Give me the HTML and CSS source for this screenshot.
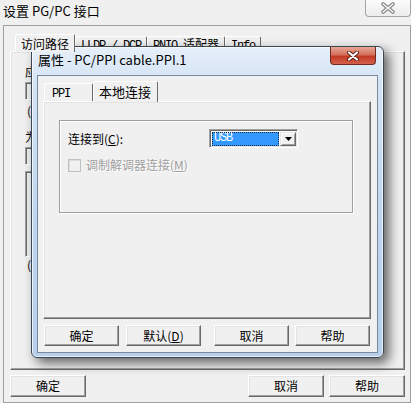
FILE: index.html
```html
<!DOCTYPE html>
<html lang="zh-CN">
<head>
  <meta charset="UTF-8">
  <title>设置 PG/PC 接口</title>
  <link rel="stylesheet" href="styles.css">
</head>
<body>
  <div class="window">
    <div class="titlebar">
      <span class="title">设置 PG/PC 接口</span>
      <span class="win-close">
        <svg width="16" height="12" viewBox="0 0 16 12">
          <path d="M3 2 L13 10 M13 2 L3 10" stroke="#858585" stroke-width="3.6" stroke-linecap="round"/>
          <path d="M3 2 L13 10 M13 2 L3 10" stroke="#f7f7f7" stroke-width="1.6" stroke-linecap="round"/>
        </svg>
      </span>
    </div>

    <div class="frame">
      <div class="tabs">
        <span class="tab active">访问路径</span>
        <span class="tab"><span class="mono">LLDP / DCP</span></span>
        <span class="tab"><span class="mono word">PNIO</span>适配器</span>
        <span class="tab"><span class="mono">Info</span></span>
      </div>
      <div class="panel outer-panel">
        <!-- only the left edge of this page shows from under the dialog -->
        <div class="field-label">应</div>
        <div class="sunken wide"></div>
        <div class="hint">(</div>
        <div class="field-label">为</div>
        <div class="sunken wide"></div>
        <div class="sunken list"></div>
        <div class="hint">(</div>
      </div>
      <div class="actions">
        <button class="btn">确定</button>
        <button class="btn push">取消</button>
        <button class="btn">帮助</button>
      </div>
    </div>

    <!-- properties dialog on top -->
    <div class="dialog">
      <div class="dialog-title">
        <span class="dialog-caption">属性 - PC/PPI cable.PPI.1</span>
        <span class="dialog-close">
          <svg width="14" height="10" viewBox="0 0 14 10">
            <path d="M3 1.5 L11 8.5 M11 1.5 L3 8.5" stroke="#5a1a10" stroke-width="4" stroke-linecap="round"/>
            <path d="M3 1.5 L11 8.5 M11 1.5 L3 8.5" stroke="#fff" stroke-width="2.2" stroke-linecap="round"/>
          </svg>
        </span>
      </div>
      <div class="client">
        <div class="tabs d-tabs">
          <span class="tab ppi"><span class="mono">PPI</span></span>
          <span class="tab active local">本地连接</span>
        </div>
        <div class="panel inner-panel">
          <div class="group">
            <div class="row">
              <span class="row-label">连接到(<u>C</u>):</span>
              <div class="combo">
                <span class="combo-value mono">USB</span>
                <span class="combo-arrow">
                  <svg width="7" height="4" viewBox="0 0 7 4"><path d="M0 0 H7 L3.5 4 Z" fill="#000"/></svg>
                </span>
              </div>
            </div>
            <div class="row check-row">
              <span class="checkbox"></span>
              <span class="disabled">调制解调器连接(<u>M</u>)</span>
            </div>
          </div>
        </div>
        <div class="dialog-actions">
          <button class="btn small">确定</button>
          <button class="btn small gap-a">默认(<u>D</u>)</button>
          <button class="btn small gap-b">取消</button>
          <button class="btn small gap-c">帮助</button>
        </div>
      </div>
    </div>
  </div>
</body>
</html>
```

FILE: styles.css
```css
* {
  margin: 0;
  padding: 0;
  box-sizing: border-box;
}

body {
  width: 411px;
  height: 403px;
  overflow: hidden;
  background: #f0f0f0;
  font-family: "Noto Sans CJK SC", "Noto Sans", sans-serif;
  font-size: 12px;
  line-height: 14px;
  color: #000;
}

.mono {
  font-family: "Liberation Mono", "Noto Sans CJK SC", monospace;
  font-size: 12px;
  letter-spacing: -1.2px;
}

.mono.word {
  margin-right: 6px;
}

u {
  text-underline-offset: 1px;
}

.window {
  position: relative;
  height: 403px;
}

/* outer window */
.titlebar {
  height: 25px;
  display: flex;
  align-items: flex-start;
}

.title {
  font-size: 13px;
  line-height: 18px;
  padding: 2px 0 0 3px;
}

.win-close {
  margin-left: auto;
  width: 46px;
  height: 17px;
  display: flex;
  justify-content: center;
  align-items: center;
  border: 1px solid #a6a6a6;
  border-top: none;
  border-radius: 0 0 4px 4px;
  background: linear-gradient(#fbfbfb, #ececec);
}

.frame {
  margin-left: 3px;
  width: 408px;
  height: 378px;
  border: 1px solid #a0a0a0;
  padding: 8px 0 0 6px;
}

.tabs {
  display: flex;
  align-items: flex-end;
  height: 17px;
  padding-left: 5px;
}

.tab {
  height: 15px;
  padding: 0 5px;
  line-height: 14px;
  white-space: nowrap;
  border: 1px solid;
  border-color: #fff #696969 transparent #fff;
  border-bottom: none;
  border-radius: 2px 2px 0 0;
  background: #f0f0f0;
}

.tab.active {
  height: 18px;
  margin-bottom: -1px;
  padding-top: 2px;
  position: relative;
  z-index: 1;
}

.panel {
  border: 1px solid;
  border-color: #fff #696969 #696969 #fff;
  box-shadow: inset -1px -1px #a0a0a0, inset 1px 1px #e3e3e3;
}

.outer-panel {
  width: 395px;
  height: 319px;
  padding: 12px 0 0 14px;
}

.field-label {
  line-height: 16px;
}

.sunken {
  border: 1px solid;
  border-color: #a0a0a0 #fff #fff #a0a0a0;
  box-shadow: inset 1px 1px #696969;
  background: #f0f0f0;
}

.wide {
  width: 300px;
  height: 18px;
  margin: 2px 0 3px;
}

.list {
  width: 300px;
  height: 86px;
  margin-top: 6px;
}

.hint {
  line-height: 16px;
  margin-bottom: 10px;
  padding-left: 2px;
}

.actions {
  display: flex;
  width: 395px;
  margin-top: 5px;
}

.btn {
  width: 76px;
  height: 22px;
  font: inherit;
  font-size: 12px;
  line-height: 14px;
  color: #000;
  background: #f0f0f0;
  border: 1px solid;
  border-color: #fff #696969 #696969 #fff;
  box-shadow: inset -1px -1px #a0a0a0, inset 1px 1px #e3e3e3;
}

.push {
  margin-left: auto;
  margin-right: 5px;
}

/* properties dialog */
.dialog {
  position: absolute;
  left: 31px;
  top: 46px;
  width: 353px;
  height: 312px;
  border: 1px solid #3c4650;
  border-radius: 6px;
  padding: 0 5px;
  background: linear-gradient(#e6eff9, #d3e3f4 12%, #bdd5ee 60%, #b6d0ec);
  box-shadow: inset 0 0 0 1px rgba(255, 255, 255, 0.7), 5px 5px 12px rgba(0, 0, 0, 0.6);
}

.dialog-title {
  height: 28px;
  display: flex;
  align-items: flex-start;
}

.dialog-caption {
  font-size: 13px;
  line-height: 18px;
  padding: 4px 0 0 1px;
}

.dialog-close {
  margin-left: auto;
  margin-right: 2px;
  width: 46px;
  height: 18px;
  display: flex;
  justify-content: center;
  align-items: center;
  border: 1px solid #6e2a20;
  border-top: none;
  border-radius: 0 0 4px 4px;
  background: linear-gradient(#e7a696, #d4705c 45%, #c23a25 55%, #d2604a);
}

.client {
  width: 341px;
  height: 278px;
  border: 1px solid #7a8a9e;
  background: #f0f0f0;
  padding: 5px 0 0 5px;
}

.d-tabs {
  height: 20px;
  padding-left: 1px;
}

.d-tabs .tab {
  height: 18px;
  line-height: 16px;
}

.d-tabs .tab.active {
  height: 21px;
  padding-top: 2px;
  font-size: 13px;
}

.ppi {
  width: 49px;
  padding-left: 7px;
}

.local {
  width: 65px;
}

.inner-panel {
  width: 328px;
  height: 218px;
  padding: 18px 0 0 15px;
}

.group {
  width: 294px;
  height: 93px;
  border: 1px solid #a0a0a0;
  box-shadow: inset 1px 1px #fff, 1px 1px #fff;
  padding: 8px 0 0 8px;
}

.row {
  display: flex;
  align-items: center;
}

.row-label {
  width: 141px;
}

.combo {
  width: 89px;
  height: 19px;
  display: flex;
  padding: 2px 1px 1px 2px;
  border: 1px solid;
  border-color: #a0a0a0 #fff #fff #a0a0a0;
  box-shadow: inset 1px 1px #696969, inset -1px -1px #e3e3e3;
  background: #fff;
}

.combo-value {
  flex: 1;
  margin-right: 1px;
  background: #3399ff;
  color: #fff;
  line-height: 13px;
  padding-left: 2px;
  outline: 1px dotted #1a2a40;
  outline-offset: -1px;
}

.combo-arrow {
  width: 16px;
  display: flex;
  justify-content: center;
  align-items: center;
  background: #f0f0f0;
  border: 1px solid;
  border-color: #e3e3e3 #696969 #696969 #e3e3e3;
  box-shadow: inset 1px 1px #fff, inset -1px -1px #a0a0a0;
}

.check-row {
  margin-top: 10px;
}

.checkbox {
  width: 13px;
  height: 13px;
  border: 1px solid #c0c0c0;
  box-shadow: inset 1px 1px #dcdcdc;
  margin-right: 5px;
}

.disabled {
  color: #a0a0a0;
  text-shadow: 1px 1px #fff;
}

.dialog-actions {
  display: flex;
  margin-top: 6px;
  padding-left: 1px;
}

.btn.small {
  width: 75px;
  height: 21px;
}

.gap-a {
  margin-left: 7px;
}

.gap-b {
  margin-left: 13px;
}

.gap-c {
  margin-left: 6px;
}
```
